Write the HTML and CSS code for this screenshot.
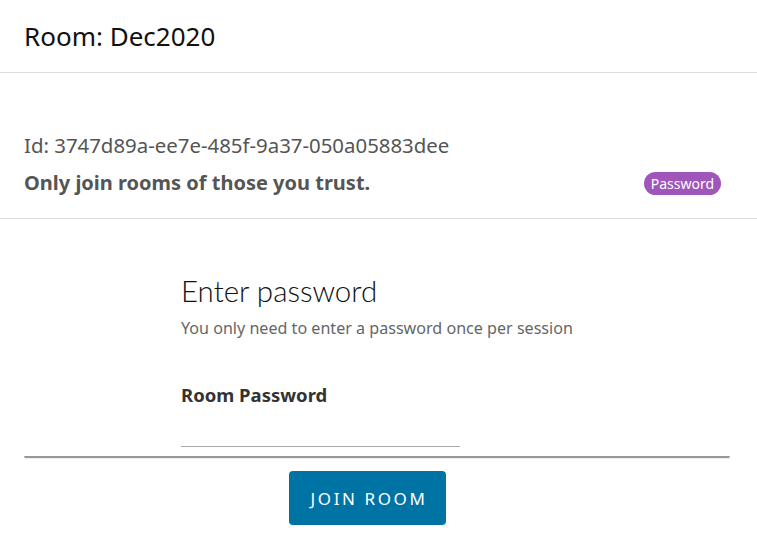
FILE: index.html
```html
<!DOCTYPE html>
<html>
<head>
<meta charset="utf-8">
<link rel="stylesheet" href="styles.css">
</head>
<body>
<div class="page">
  <header class="head">
    <h1 class="title">Room: Dec2020</h1>
  </header>
  <section class="info">
    <div class="info-text">
      <p class="room-id">Id: 3747d89a-ee7e-485f-9a37-050a05883dee</p>
      <p class="warn">Only join rooms of those you trust.</p>
    </div>
    <span class="badge">Password</span>
  </section>
  <section class="form">
    <div class="form-inner">
      <h2 class="form-title">Enter password</h2>
      <p class="form-sub">You only need to enter a password once per session</p>
      <label class="label">Room Password</label>
      <div class="input"></div>
    </div>
    <div class="wide-line"></div>
    <div class="actions">
      <button class="btn">JOIN ROOM</button>
    </div>
  </section>
</div>
</body>
</html>
```
FILE: styles.css
```css
* { box-sizing: border-box; }
body {
  margin: 0;
  background: #fff;
  font-family: "Noto Sans", "Open Sans", sans-serif;
}
.page { width: 757px; }
.head {
  height: 73px;
  border-bottom: 1px solid #dedede;
  padding: 19px 24px 0;
}
.title {
  margin: 0;
  font-weight: 400;
  font-size: 26px;
  line-height: 34px;
  color: #111;
}
.info {
  display: flex;
  align-items: flex-end;
  justify-content: space-between;
  height: 146px;
  border-bottom: 1px solid #dedede;
  padding: 0 36px 22px 24px;
}
.room-id {
  margin: 0 0 12px;
  font-size: 20.4px;
  line-height: 26px;
  color: #555;
}
.warn {
  margin: 0;
  font-size: 20px;
  font-weight: 700;
  line-height: 26px;
  color: #555;
}
.badge {
  background: #a055bb;
  color: #fff;
  font-size: 14px;
  line-height: 23px;
  padding: 0 7px;
  border-radius: 12px;
  margin-bottom: 1px;
}
.form { padding-top: 54px; }
.form-inner {
  margin-left: 181px;
  width: 279px;
}
.form-title {
  margin: 0;
  font-family: "Lato", sans-serif;
  font-weight: 300;
  font-size: 29.5px;
  line-height: 36px;
  color: #111;
  white-space: nowrap;
}
.form-sub {
  margin: 8px 0 0;
  font-size: 16.1px;
  line-height: 22px;
  color: #666;
  white-space: nowrap;
}
.label {
  display: block;
  margin-top: 43px;
  font-size: 18.5px;
  font-weight: 700;
  line-height: 26px;
  color: #333;
}
.input {
  height: 39px;
  border-bottom: 1px solid #aaa;
}
.wide-line {
  margin: 9px 27px 0 24px;
  height: 3px;
  border: 1px solid #eee;
  border-top: 2px solid #999;
}
.actions {
  display: flex;
  justify-content: center;
  padding-top: 12px;
}
.btn {
  width: 157px;
  height: 54px;
  margin-left: -22px;
  background: #0073a5;
  color: #fff;
  border: none;
  border-radius: 4px;
  font-family: "Noto Sans", sans-serif;
  font-size: 17px;
  letter-spacing: 2.6px;
  padding: 0 0 0 3px;
}
```
